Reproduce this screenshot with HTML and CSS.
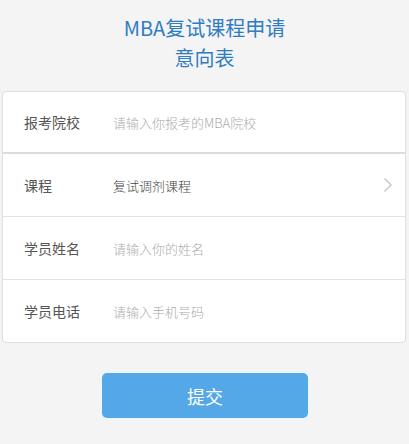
FILE: index.html
```html
<!DOCTYPE html>
<html lang="zh">
<head>
<meta charset="utf-8">
<link rel="stylesheet" href="styles.css">
</head>
<body>
<div class="page">
  <h1 class="title">MBA复试课程申请<br>意向表</h1>
  <div class="card">
    <div class="row">
      <span class="label">报考院校</span>
      <span class="value placeholder">请输入你报考的MBA院校</span>
    </div>
    <div class="row row-thick">
      <span class="label">课程</span>
      <span class="value">复试调剂课程</span>
      <svg class="chev" width="10" height="16" viewBox="0 0 10 16"><path d="M1.5 1.5 L8 8 L1.5 14.5" fill="none" stroke="#c4c4c4" stroke-width="1.4"/></svg>
    </div>
    <div class="row">
      <span class="label">学员姓名</span>
      <span class="value placeholder">请输入你的姓名</span>
    </div>
    <div class="row last">
      <span class="label">学员电话</span>
      <span class="value placeholder">请输入手机号码</span>
    </div>
  </div>
  <div class="actions">
    <button class="submit">提交</button>
  </div>
</div>
</body>
</html>
```
FILE: styles.css
```css
html, body {
  margin: 0;
  padding: 0;
  background: #f4f4f4;
  font-family: "Microsoft YaHei", "Noto Sans CJK SC", "Noto Sans", sans-serif;
}
.page {
  width: 409px;
  height: 444px;
  overflow: hidden;
}
.title {
  margin: 0;
  padding-top: 13px;
  text-align: center;
  font-size: 20px;
  font-weight: normal;
  line-height: 30px;
  color: #2f7cc3;
}
.card {
  margin: 18px 3px 0 2px;
  background: #fff;
  border: 1px solid #dedede;
  border-radius: 4px;
}
.row {
  height: 62px;
  display: flex;
  align-items: center;
  border-bottom: 1px solid #e2e2e2;
  position: relative;
}
.row:first-child {
  height: 60px;
  border-bottom: 2px solid #dcdcdc;
}
.row.last {
  border-bottom: none;
}
.label {
  width: 89px;
  padding-left: 21px;
  font-size: 14px;
  color: #555;
}
.value {
  font-size: 13px;
  color: #444;
  font-weight: 300;
}
.placeholder {
  color: #ababab;
}
.chev {
  position: absolute;
  right: 12px;
  top: 23px;
}
.actions {
  display: flex;
  justify-content: center;
  margin-top: 30px;
}
.submit {
  width: 206px;
  height: 45px;
  margin-left: 1px;
  border: none;
  border-radius: 5px;
  background: #55a8e8;
  color: #fff;
  font-family: inherit;
  font-size: 18px;
  box-shadow: 0 0 0 2px #eef6fc;
}
```
